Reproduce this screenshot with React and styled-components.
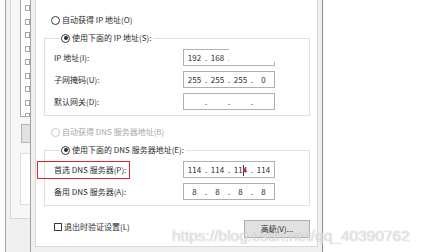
import styled, { createGlobalStyle } from "styled-components";

const GlobalStyle = createGlobalStyle`
  body {
    margin: 0;
    background: #ffffff;
    font-family: "Noto Sans CJK SC", "Noto Sans", sans-serif;
    color: #2b2b2b;
  }
`;

const Radio = ({ checked, disabled, children }) => (
  <RadioLabel $disabled={disabled}>
    <Circle $checked={checked} $disabled={disabled} />
    {children}
  </RadioLabel>
);

const IpField = ({ octets, mask, caret }) => (
  <Field>
    {octets.map((o, i) => (
      <Part key={i}>
        {i > 0 && <Dot>.</Dot>}
        <Octet>
          {o}
          {caret && i === 2 && (
            <>
              <Caret />
              <CaretMark />
            </>
          )}
        </Octet>
      </Part>
    ))}
    {mask && <Mask />}
  </Field>
);

export default function App() {
  return (
    <>
      <GlobalStyle />
      <Screen>
        <BackWindow>
          <BackGap />
          <BackFrame>
            <BackPanel>
              <ListBox>
                {Array.from({ length: 9 }).map((_, i) => (
                  <ListMark key={i} />
                ))}
              </ListBox>
              <BackButton />
              <BackBox />
            </BackPanel>
          </BackFrame>
        </BackWindow>

        <Dialog>
          <Panel>
            <RadioRow>
              <Radio>自动获得 IP 地址(O)</Radio>
            </RadioRow>

            <Group>
              <Legend>
                <Radio checked>使用下面的 IP 地址(S):</Radio>
              </Legend>
              <Rows>
                <FieldLabel>IP 地址(I):</FieldLabel>
                <IpField octets={["192", "168", "", ""]} mask />
                <FieldLabel>子网掩码(U):</FieldLabel>
                <IpField octets={["255", "255", "255", "0"]} />
                <FieldLabel>默认网关(D):</FieldLabel>
                <IpField octets={["", "", "", ""]} />
              </Rows>
            </Group>

            <RadioRow $gap={9}>
              <Radio disabled>自动获得 DNS 服务器地址(B)</Radio>
            </RadioRow>

            <Group>
              <Legend>
                <Radio checked>使用下面的 DNS 服务器地址(E):</Radio>
              </Legend>
              <Rows>
                <FieldLabel $marked>首选 DNS 服务器(P):</FieldLabel>
                <IpField octets={["114", "114", "114", "114"]} caret />
                <FieldLabel>备用 DNS 服务器(A):</FieldLabel>
                <IpField octets={["8", "8", "8", "8"]} />
              </Rows>
            </Group>

            <Footer>
              <CheckLabel>
                <Box />
                退出时验证设置(L)
              </CheckLabel>
              <Button>高级(V)...</Button>
            </Footer>
          </Panel>
        </Dialog>

        <Watermark>https://blog.csdn.net/qq_40390762</Watermark>
      </Screen>
    </>
  );
}

const Screen = styled.div`
  position: relative;
  display: flex;
  width: 425px;
  height: 252px;
  overflow: hidden;
  background: #ffffff;
`;

const BackWindow = styled.div`
  display: flex;
  width: 30px;
  flex-shrink: 0;
`;

const BackGap = styled.div`
  width: 7px;
  background: #fbfbfb;
`;

const BackFrame = styled.div`
  flex: 1;
  background: #f0f0f0;
  border-left: 1px solid #a6a6a6;
  padding-left: 4px;
`;

const BackPanel = styled.div`
  height: 219px;
  box-sizing: border-box;
  border-left: 1px solid #d6d6d6;
  border-bottom: 1px solid #d6d6d6;
  background: #f7f7f7;
  padding-left: 9px;
`;

const ListBox = styled.div`
  height: 117px;
  box-sizing: border-box;
  border: 1px solid #a8a8a8;
  border-top: none;
  border-right: none;
  background: #ffffff;
  padding: 5px 0 0 4px;
  display: flex;
  flex-direction: column;
  gap: 7.5px;
  overflow: hidden;
`;

const ListMark = styled.span`
  width: 5px;
  height: 6px;
  box-sizing: border-box;
  border: 1px solid #a5a5a5;
  flex-shrink: 0;
`;

const BackButton = styled.div`
  margin-top: 7px;
  height: 17px;
  margin-left: 1px;
  background: #e1e1e1;
  border: 1px solid #b5b5b5;
  border-right: none;
`;

const BackBox = styled.div`
  margin-top: 10px;
  height: 50px;
  border: 1px solid #dcdcdc;
  border-right: none;
  background: #ffffff;
`;

const Dialog = styled.div`
  width: 293px;
  height: 252px;
  box-sizing: border-box;
  flex-shrink: 0;
  background: #f0f0f0;
  border-left: 1px solid #a0a0a0;
  border-right: 1px solid #8c8c8c;
  padding: 0 4px;
`;

const Panel = styled.div`
  height: 247px;
  box-sizing: border-box;
  background: #ffffff;
  border: 1px solid #d9d9d9;
  border-top: none;
  padding: 13px 7px 0 8px;
  display: flex;
  flex-direction: column;
`;

const RadioRow = styled.div`
  margin-top: ${(p) => p.$gap || 0}px;
  padding-left: 7px;
  height: 14px;
  display: flex;
  align-items: center;
`;

const RadioLabel = styled.span`
  display: inline-flex;
  align-items: center;
  gap: 2px;
  font-size: 8px;
  line-height: 14px;
  white-space: nowrap;
  color: ${(p) => (p.$disabled ? "#a8a8a8" : "#2b2b2b")};
`;

const Circle = styled.span`
  width: 9px;
  height: 9px;
  box-sizing: border-box;
  border-radius: 50%;
  border: 1px solid ${(p) => (p.$disabled ? "#c8c8c8" : "#3a3a3a")};
  background: #ffffff;
  display: grid;
  place-items: center;

  &::after {
    content: "";
    width: 4px;
    height: 4px;
    border-radius: 50%;
    background: ${(p) => (p.$checked ? "#2a2a2a" : "transparent")};
  }
`;

const Group = styled.fieldset`
  margin: 4px 0 0 0;
  padding: 4px 0 5px 9px;
  border: 1px solid #e0e0e0;
  min-width: 0;
`;

const Legend = styled.legend`
  margin-left: 6px;
  padding: 0 2px 0 1px;
  height: 14px;
  display: flex;
  align-items: center;
`;

const Rows = styled.div`
  display: grid;
  grid-template-columns: 129px 92px;
  grid-auto-rows: 17px;
  row-gap: 5px;
  align-items: center;
`;

const FieldLabel = styled.span`
  position: relative;
  font-size: 8px;
  line-height: 14px;
  white-space: nowrap;

  &::before {
    content: "";
    display: ${(p) => (p.$marked ? "block" : "none")};
    position: absolute;
    left: -17px;
    top: -2px;
    width: 93px;
    height: 18px;
    box-sizing: border-box;
    border: 1px solid #e0262a;
  }
`;

const Field = styled.div`
  position: relative;
  width: 92px;
  height: 17px;
  box-sizing: border-box;
  border: 1px solid #b0b0b0;
  background: #ffffff;
  display: flex;
  align-items: center;
  padding-left: 1px;
  font-size: 8px;
`;

const Part = styled.span`
  display: flex;
`;

const Octet = styled.span`
  position: relative;
  width: 19px;
  text-align: center;
`;

const Dot = styled.span`
  width: 4px;
  text-align: center;
`;

const Caret = styled.span`
  position: absolute;
  left: 12px;
  top: 1px;
  width: 1px;
  height: 11px;
  background: #333333;
`;

const CaretMark = styled.span`
  position: absolute;
  left: 12px;
  top: 5px;
  width: 3px;
  height: 3px;
  background: #d8252a;
`;

const Mask = styled.span`
  position: absolute;
  left: 45px;
  top: -4px;
  width: 52px;
  height: 16px;
  background: #ffffff;
`;

const Footer = styled.div`
  margin-top: 14px;
  padding-left: 10px;
  display: flex;
  justify-content: space-between;
  align-items: flex-start;
`;

const CheckLabel = styled.span`
  display: inline-flex;
  align-items: center;
  gap: 2px;
  font-size: 8px;
  line-height: 14px;
  white-space: nowrap;
`;

const Box = styled.span`
  width: 8px;
  height: 8px;
  box-sizing: border-box;
  border: 1px solid #3a3a3a;
  background: #ffffff;
`;

const Button = styled.div`
  width: 66px;
  height: 18px;
  box-sizing: border-box;
  background: #e1e1e1;
  border: 1px solid #adadad;
  font-size: 8px;
  line-height: 16px;
  text-align: center;
`;

const Watermark = styled.div`
  position: absolute;
  left: 172px;
  top: 227px;
  font-family: "Liberation Sans", Arial, sans-serif;
  font-size: 15.5px;
  line-height: 18px;
  white-space: nowrap;
  color: rgba(250, 250, 250, 0.7);
  text-shadow: 0 0 1px rgba(150, 150, 150, 0.8);
  pointer-events: none;
`;
